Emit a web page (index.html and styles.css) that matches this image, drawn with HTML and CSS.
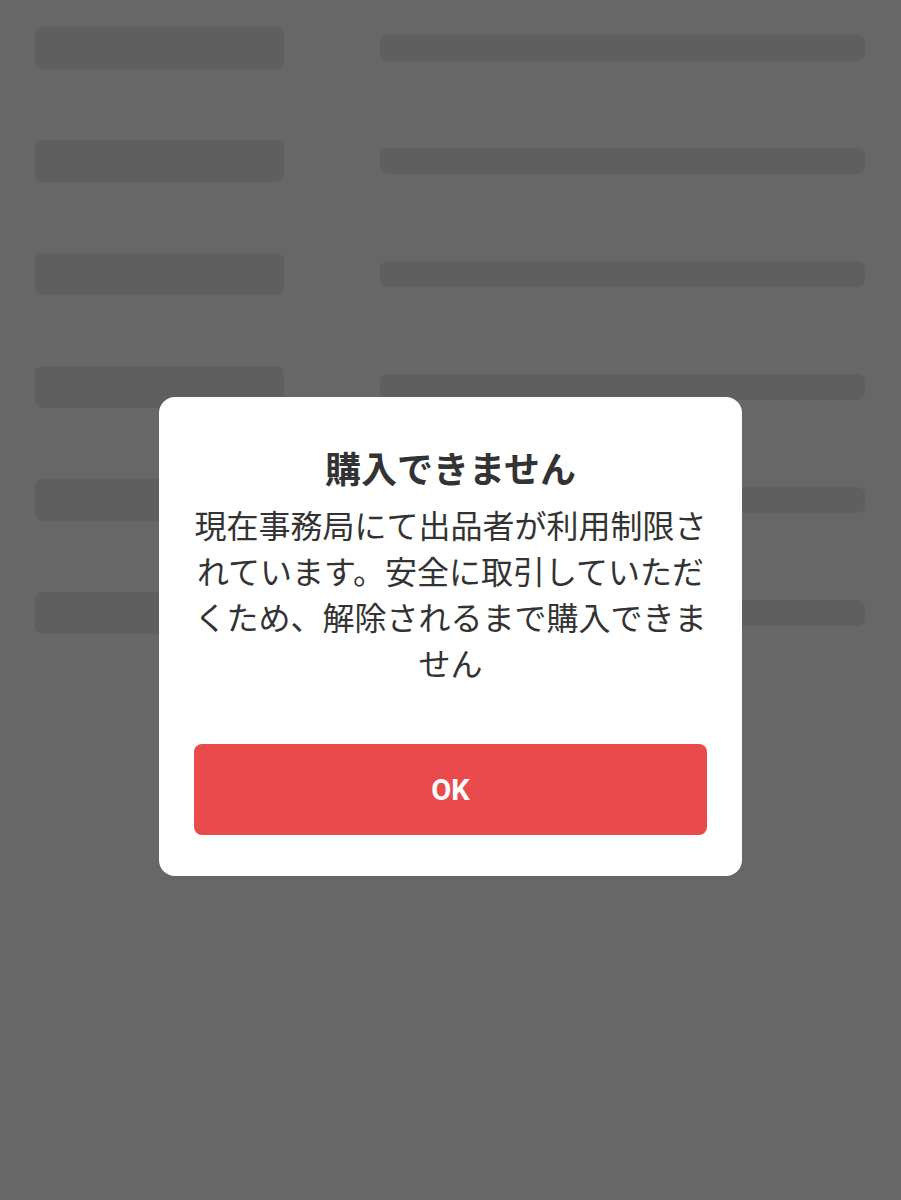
FILE: index.html
```html
<!DOCTYPE html>
<html lang="ja">
<head>
<meta charset="utf-8">
<title>購入できません</title>
<link rel="stylesheet" href="styles.css">
</head>
<body>
<main class="skeleton">
  <div class="row"><div class="bar-left"></div><div class="bar-right"></div></div>
  <div class="row"><div class="bar-left"></div><div class="bar-right"></div></div>
  <div class="row"><div class="bar-left"></div><div class="bar-right"></div></div>
  <div class="row"><div class="bar-left"></div><div class="bar-right"></div></div>
  <div class="row"><div class="bar-left"></div><div class="bar-right"></div></div>
  <div class="row"><div class="bar-left"></div><div class="bar-right"></div></div>
</main>
<div class="overlay">
  <div class="dialog" role="dialog">
    <h2 class="dialog-title">購入できません</h2>
    <p class="dialog-body">現在事務局にて出品者が利用制限されています。安全に取引していただくため、解除されるまで購入できません</p>
    <button class="dialog-button">OK</button>
  </div>
</div>
</body>
</html>
```

FILE: styles.css
```css
html, body {
  margin: 0;
  padding: 0;
}
body {
  background: #676767;
  width: 901px;
  height: 1200px;
  overflow: hidden;
  font-family: "Noto Sans CJK JP", "Noto Sans", sans-serif;
}
.skeleton {
  display: flex;
  flex-direction: column;
  gap: 71px;
  padding: 27px 36px 0 35px;
}
.row {
  display: flex;
  align-items: center;
  gap: 96px;
  height: 42px;
}
.bar-left {
  width: 249px;
  height: 42px;
  border-radius: 8px;
  background: #5f5f5f;
}
.bar-right {
  flex: 1;
  height: 26px;
  border-radius: 8px;
  background: #5f5f5f;
}
.overlay {
  position: fixed;
  inset: 0;
  display: flex;
  justify-content: center;
  align-items: flex-start;
  padding-top: 397px;
}
.dialog {
  width: 583px;
  box-sizing: border-box;
  background: #ffffff;
  border-radius: 16px;
  padding: 45px 35px 41px 35px;
  display: flex;
  flex-direction: column;
  align-items: stretch;
  text-align: center;
  color: #333333;
}
.dialog-title {
  margin: 0;
  font-size: 36px;
  font-weight: 700;
  line-height: 50px;
}
.dialog-body {
  margin: 9px 0 0 0;
  font-size: 32px;
  line-height: 46px;
  font-weight: 400;
}
.dialog-button {
  margin-top: 59px;
  height: 91px;
  flex: 0 0 91px;
  border: none;
  border-radius: 8px;
  background: #e94a4b;
  color: #ffffff;
  font-family: Roboto, "Noto Sans", sans-serif;
  font-weight: 700;
  font-size: 29px;
  padding: 0;
}
```
